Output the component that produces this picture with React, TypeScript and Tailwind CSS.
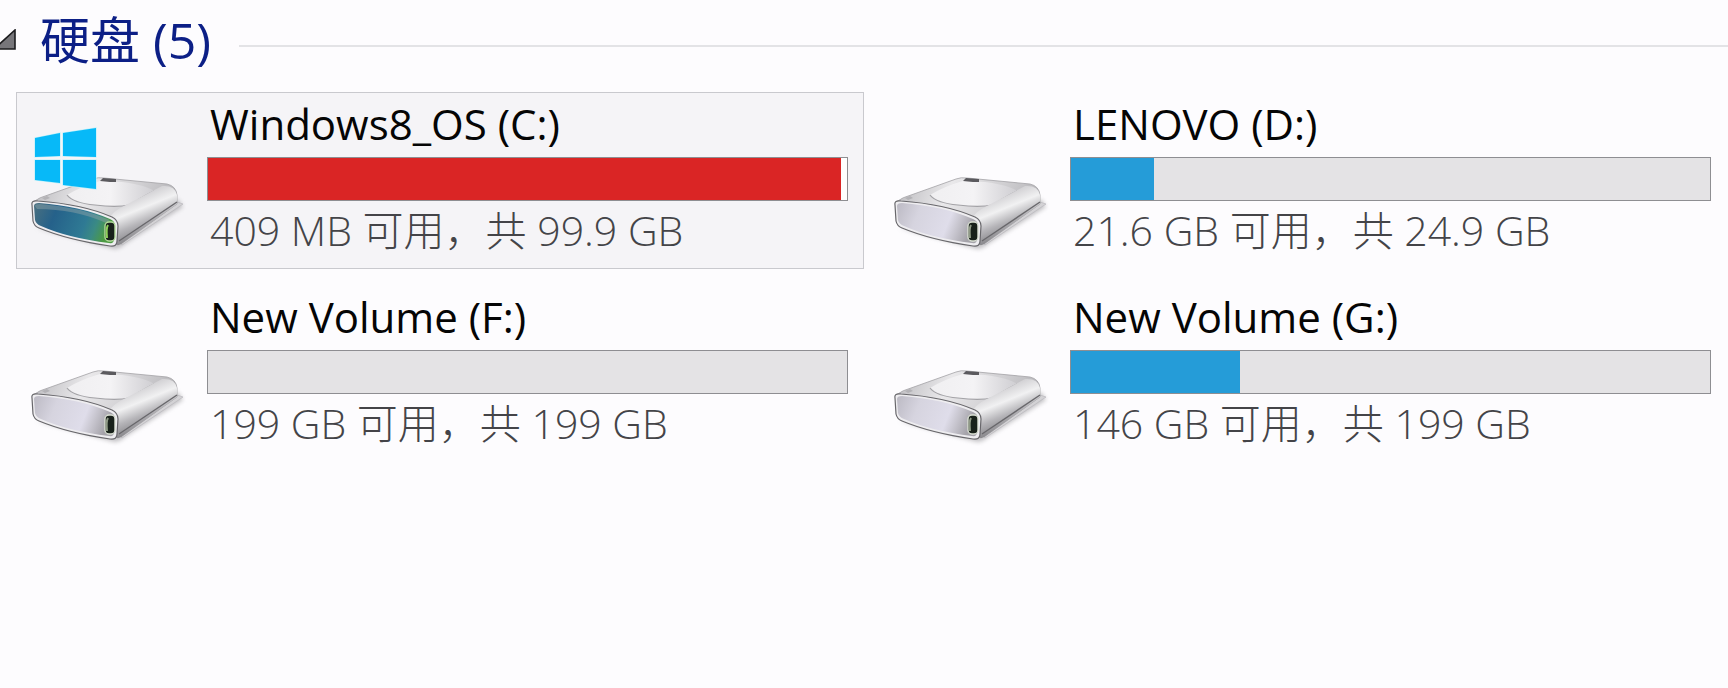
import { useState } from 'react';
import clsx from 'clsx';

type Drive = {
  id: string;
  name: string;
  info: string;
  used: number;
  full?: boolean;
  system?: boolean;
};

const drives: Drive[] = [
  { id: 'c', name: 'Windows8_OS (C:)', info: '409 MB 可用，共 99.9 GB', used: 99, full: true, system: true },
  { id: 'd', name: 'LENOVO (D:)', info: '21.6 GB 可用，共 24.9 GB', used: 13 },
  { id: 'f', name: 'New Volume (F:)', info: '199 GB 可用，共 199 GB', used: 0 },
  { id: 'g', name: 'New Volume (G:)', info: '146 GB 可用，共 199 GB', used: 26.5 },
];

function DriveIcon({ id, system }: { id: string; system?: boolean }) {
  const ref = (name: string) => `url(#${name}-${id})`;

  return (
    <svg viewBox="1 0 156 128" className="h-32 w-[156px] shrink-0" aria-hidden="true">
      <defs>
        <linearGradient id={`top-${id}`} x1="0" y1="0.2" x2="1" y2="0.4">
          <stop offset="0" stopColor="#bdbcc0" />
          <stop offset="0.35" stopColor="#e9e8ea" />
          <stop offset="0.7" stopColor="#d0cfd2" />
          <stop offset="1" stopColor="#b3b2b6" />
        </linearGradient>
        <linearGradient id={`disc-${id}`} x1="0" y1="0.4" x2="1" y2="0.4">
          <stop offset="0" stopColor="#f0eff1" />
          <stop offset="0.5" stopColor="#f4f3f5" />
          <stop offset="1" stopColor="#cfced2" />
        </linearGradient>
        <linearGradient id={`side-${id}`} x1="0.35" y1="0.2" x2="0.65" y2="0.85">
          <stop offset="0" stopColor="#d2d1d4" />
          <stop offset="0.3" stopColor="#f1f1f2" />
          <stop offset="0.6" stopColor="#b5b4b8" />
          <stop offset="1" stopColor="#77767a" />
        </linearGradient>
        <linearGradient id={`front-${id}`} x1="0" y1="0" x2="1" y2="0.2">
          <stop offset="0" stopColor={system ? '#4a7080' : '#bcbac4'} />
          <stop offset="0.3" stopColor={system ? '#25618a' : '#d6d4df'} />
          <stop offset="0.7" stopColor={system ? '#2f7a94' : '#dfddea'} />
          <stop offset="0.84" stopColor={system ? '#3a8a84' : '#c5c3cc'} />
          <stop offset="1" stopColor={system ? '#4c9a42' : '#a5a3aa'} />
        </linearGradient>
        <filter id={`soft-${id}`} x="-10%" y="-20%" width="120%" height="150%">
          <feGaussianBlur stdDeviation="2" />
        </filter>
      </defs>

      {/* ground shadow */}
      <path d="M6 103 L84 124 Q90 124 95 119 L153 82 L148 74 L80 110Z" fill="#8a898d" opacity="0.5" filter={ref('soft')} />

      {/* base plate */}
      <path d="M88 117 L147 77 L153 79 L92 120Z" fill="#d3d2d5" stroke="#b5b4b8" strokeWidth="0.6" />

      {/* lid */}
      <path d="M3 77 Q10 72 18 70 L63 54 Q68 52 74 53 L137 59 Q146 61 147 70 L147 79 L91 119 L84 95Z" fill={ref('top')} stroke="#a3a2a6" strokeWidth="0.8" />
      <path d="M37 70 Q43 78 65 80 Q97 84 110 76 Q121 71 124 66 Q116 60 92 57 L70 56 Q52 61 37 70Z" fill={ref('disc')} />
      <path d="M37 70 Q43 78 65 80 Q97 84 110 76 Q121 71 124 66" fill="none" stroke="#a3a2a6" strokeWidth="1.2" />
      <path d="M104 77 Q116 74 124 66 Q117 69 104 77Z" fill="#8d8c90" stroke="#8d8c90" strokeWidth="0.8" />
      <path d="M70 56 L73 53 L86 54 L86 57 L80 57Z" fill="#5b5a5e" />
      <path d="M12 73 L17 71 L20 73 L15 75Z" fill="#b3b2b6" />

      {/* right side */}
      <path d="M80 92 Q84 86 92 82 L132 61 Q145 60 147 70 L147 79 L91 119 Q86 122 86 117Z" fill={ref('side')} />
      <path d="M89 116 L147 77" fill="none" stroke="#68676b" strokeWidth="1.4" />

      {/* front panel */}
      <path d="M2 80 Q1 75 8 76 Q52 79 82 92 Q88 95 88 101 L87 116 Q87 122 80 121 Q38 115 9 103 Q4 101 3 96Z" fill="#eeedf0" stroke="#68676b" strokeWidth="1.2" />
      <path d="M4 81 Q4 78 9 78 Q50 81 80 94 Q85 96 85 101 L84 114 Q84 119 79 118 Q38 113 11 101 Q6 99 5 95Z" fill={ref('front')} />
      {system && <path d="M5 81 Q5 79 10 79 Q50 82 80 95 L76 98 Q45 84 7 84Z" fill="#8aa0a6" opacity="0.5" />}

      {/* power button */}
      <rect x="75" y="97" width="10" height="19" rx="4" fill="#18211a" stroke={system ? '#b4dc9c' : '#d9dfd2'} strokeWidth="1.4" />
      <path d="M78 100 Q76 103 77 113" fill="none" stroke={system ? '#8ed05a' : '#8f9a86'} strokeWidth="2" />

      {system && (
        <g fill="#07b9f8" stroke="#b9f1fb" strokeWidth="1.2" paintOrder="stroke">
          <path d="M5 13 L30 8 V31 L5 32Z" />
          <path d="M33 8 L66 3 V32 L33 31Z" />
          <path d="M5 35 H30 V58 L5 55Z" />
          <path d="M33 35 H66 V64 L33 60Z" />
        </g>
      )}
    </svg>
  );
}

function DriveTile({ drive, selected, onSelect }: { drive: Drive; selected: boolean; onSelect: () => void }) {
  return (
    <button
      type="button"
      aria-pressed={selected}
      onClick={onSelect}
      className={clsx(
        'flex w-full items-start gap-5 border pt-1 pr-[15px] pb-[11px] pl-3.5 text-left',
        selected ? 'border-[#c9c9ce] bg-[#f5f4f7]' : 'border-transparent',
      )}
    >
      <span className="mt-7 shrink-0">
        <DriveIcon id={drive.id} system={drive.system} />
      </span>
      <span className="block min-w-0 flex-1">
        <span className="mb-1.5 block h-[54px] pl-[3px] text-[42px] leading-[54px] whitespace-nowrap text-[#050505]">
          {drive.name}
        </span>
        <span
          role="meter"
          aria-label={drive.name}
          aria-valuemin={0}
          aria-valuemax={100}
          aria-valuenow={drive.used}
          className={clsx('block h-11 border border-[#8e8e92]', drive.full ? 'bg-white' : 'bg-[#e4e3e5]')}
        >
          <span
            className={clsx('block h-full', drive.full ? 'bg-[#da2525]' : 'bg-[#259cd8]')}
            style={{ width: `${drive.used}%` }}
          />
        </span>
        <span className="mt-0.5 block h-[54px] pl-[3px] text-[41px] leading-[54px] font-light whitespace-nowrap text-[#444448]">
          {drive.info}
        </span>
      </span>
    </button>
  );
}

export default function App() {
  const [open, setOpen] = useState(true);
  const [selected, setSelected] = useState('c');

  return (
    <main className="min-h-screen bg-[#fdfcfe] font-['Open_Sans','Noto_Sans_CJK_SC',sans-serif]">
      <header className="flex h-[92px] items-center pb-3">
        <h2 className="text-[50px] leading-[64px] text-[#0c1f86]">
          <button type="button" aria-expanded={open} onClick={() => setOpen(!open)} className="flex items-center gap-6">
            <svg viewBox="0 0 16 22" className="h-[22px] w-4" aria-hidden="true">
              <path d="M-6 20 L15 1 V20Z" fill="#77767a" stroke="#1c1c1e" strokeWidth="1.6" />
            </svg>
            <span className="whitespace-nowrap">硬盘 (5)</span>
          </button>
        </h2>
        <span className="mt-3 ml-7 h-0.5 flex-1 bg-[#e3e3e6]" />
      </header>

      {open && (
        <section className="grid grid-cols-2 gap-x-[15px] gap-y-4 pr-px pl-4">
          {drives.map((drive) => (
            <DriveTile
              key={drive.id}
              drive={drive}
              selected={selected === drive.id}
              onSelect={() => setSelected(drive.id)}
            />
          ))}
        </section>
      )}
    </main>
  );
}
